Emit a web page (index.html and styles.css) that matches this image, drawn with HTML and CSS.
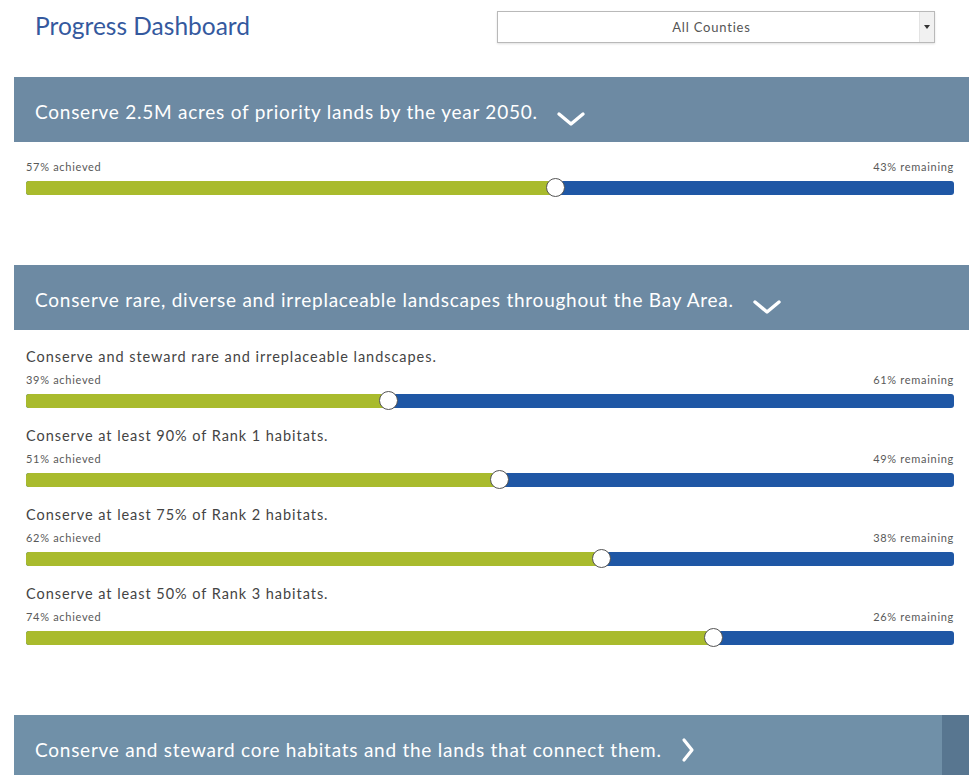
FILE: index.html
```html
<!DOCTYPE html>
<html lang="en">
<head>
<meta charset="utf-8">
<title>Progress Dashboard</title>
<link rel="stylesheet" href="styles.css">
</head>
<body>
<header class="top">
  <h1 class="page-title">Progress Dashboard</h1>
  <div class="select">
    <span class="select-value">All Counties</span>
    <span class="select-arrow"><span class="caret"></span></span>
  </div>
</header>

<section class="goal">
  <div class="goal-head">
    <span class="goal-title">Conserve 2.5M acres of priority lands by the year 2050.</span>
    <svg class="chev-down" width="30" height="16" viewBox="0 0 30 16"><path d="M3 3 L15 13 L27 3" fill="none" stroke="#fff" stroke-width="3.4" stroke-linecap="round" stroke-linejoin="round"/></svg>
  </div>
  <div class="goal-body">
    <div class="metric">
      <div class="labels"><span>57% achieved</span><span>43% remaining</span></div>
      <div class="bar"><div class="fill" style="width:57%"></div><span class="knob" style="left:57%"></span></div>
    </div>
  </div>
</section>

<section class="goal">
  <div class="goal-head">
    <span class="goal-title">Conserve rare, diverse and irreplaceable landscapes throughout the Bay Area.</span>
    <svg class="chev-down" width="30" height="16" viewBox="0 0 30 16"><path d="M3 3 L15 13 L27 3" fill="none" stroke="#fff" stroke-width="3.4" stroke-linecap="round" stroke-linejoin="round"/></svg>
  </div>
  <div class="goal-body">
    <div class="metric">
      <div class="metric-title">Conserve and steward rare and irreplaceable landscapes.</div>
      <div class="labels"><span>39% achieved</span><span>61% remaining</span></div>
      <div class="bar"><div class="fill" style="width:39%"></div><span class="knob" style="left:39%"></span></div>
    </div>
    <div class="metric">
      <div class="metric-title">Conserve at least 90% of Rank 1 habitats.</div>
      <div class="labels"><span>51% achieved</span><span>49% remaining</span></div>
      <div class="bar"><div class="fill" style="width:51%"></div><span class="knob" style="left:51%"></span></div>
    </div>
    <div class="metric">
      <div class="metric-title">Conserve at least 75% of Rank 2 habitats.</div>
      <div class="labels"><span>62% achieved</span><span>38% remaining</span></div>
      <div class="bar"><div class="fill" style="width:62%"></div><span class="knob" style="left:62%"></span></div>
    </div>
    <div class="metric">
      <div class="metric-title">Conserve at least 50% of Rank 3 habitats.</div>
      <div class="labels"><span>74% achieved</span><span>26% remaining</span></div>
      <div class="bar"><div class="fill" style="width:74%"></div><span class="knob" style="left:74%"></span></div>
    </div>
  </div>
</section>

<section class="goal goal-closed">
  <div class="goal-head">
    <span class="goal-title">Conserve and steward core habitats and the lands that connect them.</span>
    <svg class="chev-right" width="16" height="26" viewBox="0 0 16 26"><path d="M4 3 L12 13 L4 23" fill="none" stroke="#fff" stroke-width="3.2" stroke-linecap="round" stroke-linejoin="round"/></svg>
  </div>
</section>
</body>
</html>
```

FILE: styles.css
```css
html, body {
  margin: 0;
  padding: 0;
  background: #fff;
}

body {
  width: 969px;
  height: 775px;
  overflow: hidden;
  font-family: Lato, "Open Sans", sans-serif;
  color: #444;
}

/* page header: title and county picker */
.top {
  display: flex;
  align-items: flex-start;
  height: 77px;
}

.page-title {
  margin: 11px 0 0 35px;
  font-size: 24.5px;
  font-weight: 400;
  color: #34599e;
  line-height: 30px;
  width: 462px;
}

.select {
  margin-top: 11px;
  width: 436px;
  height: 30px;
  border: 1px solid #b9b9b9;
  box-shadow: 0 1px 2px rgba(0,0,0,0.12);
  display: flex;
  align-items: center;
  background: #fff;
}

.select-value {
  flex: 1;
  text-align: center;
  font-size: 13px;
  letter-spacing: 0.8px;
  color: #555;
  padding-left: 6px;
}

.select-arrow {
  width: 14px;
  height: 100%;
  background: #f1f1f1;
  border-left: 1px solid #e3e3e3;
  display: flex;
  align-items: center;
  justify-content: center;
}

.caret {
  width: 0;
  height: 0;
  border-left: 3px solid transparent;
  border-right: 3px solid transparent;
  border-top: 4px solid #333;
}

/* goal sections */
.goal {
  margin-bottom: 70px;
}

.goal-head {
  margin-left: 14px;
  height: 65px;
  background: #6d8aa3;
  display: flex;
  align-items: center;
  padding-left: 21px;
  color: #fff;
  position: relative;
}

.goal-title {
  font-size: 19px;
  letter-spacing: 0.75px;
  margin-top: 3px;
}

.chev-down {
  margin-left: 18px;
  margin-top: 18px;
}

.chev-right {
  margin-left: 18px;
  margin-top: 4px;
}

.goal-closed .goal-head {
  background: #7090a8;
}

.goal-closed .goal-head::after {
  content: "";
  position: absolute;
  top: 0;
  bottom: 0;
  right: 0;
  width: 27px;
  background: #587690;
}

.goal-body {
  padding: 18px 15px 0 26px;
  display: flex;
  flex-direction: column;
  gap: 19px;
}

.metric-title {
  font-size: 14.5px;
  letter-spacing: 0.95px;
  line-height: 18px;
  color: #444;
  margin-bottom: 7px;
}

.labels {
  display: flex;
  justify-content: space-between;
  font-size: 11px;
  letter-spacing: 0.7px;
  line-height: 14px;
  color: #595959;
  margin-bottom: 7px;
}

.bar {
  position: relative;
  height: 14px;
  border-radius: 3px;
  background: #1f57a5;
}

.fill {
  height: 100%;
  background: #a9bb2d;
  border-radius: 3px 0 0 3px;
}

.knob {
  position: absolute;
  top: 50%;
  width: 17px;
  height: 17px;
  margin-left: -9px;
  margin-top: -10px;
  border-radius: 50%;
  background: #fff;
  border: 1.5px solid #555;
}
```
